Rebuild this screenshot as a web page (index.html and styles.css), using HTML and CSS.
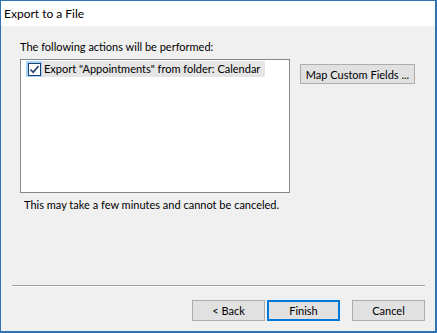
FILE: index.html
```html
<!DOCTYPE html>
<html>
  <head>
    <title>Export to a File</title>
    <link rel="stylesheet" href="styles.css">
  </head>
  <body>
    <div class="window">
      <div class="titlebar">Export to a File</div>
      <main class="content">
        <p class="caption">The following actions will be performed:</p>
        <div class="main-row">
          <div class="listbox">
            <div class="item">
              <span class="check-cell">
                <span class="checkbox">
                  <svg width="11" height="11" viewBox="0 0 11 11">
                    <path d="M1.5 5.5 L4.2 8.2 L9.5 2" fill="none" stroke="#1c3f6b" stroke-width="1.6"/>
                  </svg>
                </span>
              </span>
              <span class="item-text">Export "Appointments" from folder: Calendar</span>
            </div>
          </div>
          <button class="btn btn-map">Map Custom Fields ...</button>
        </div>
        <p class="note">This may take a few minutes and cannot be canceled.</p>
      </main>
      <footer class="footer">
        <div class="separator"></div>
        <div class="buttons">
          <button class="btn">&lt; Back</button>
          <button class="btn btn-default">Finish</button>
          <button class="btn btn-cancel">Cancel</button>
        </div>
      </footer>
    </div>
  </body>
</html>
```

FILE: styles.css
```css
* {
  margin: 0;
  padding: 0;
  box-sizing: border-box;
}
body {
  font-family: Lato, "Liberation Sans", sans-serif;
  font-size: 11px;
  color: #000;
  background: #fff;
}
.window {
  width: 437px;
  height: 333px;
  border: 1px solid #2e74b5;
  border-right-width: 2px;
  border-bottom-width: 2px;
  background-color: #f0f0f0;
  display: flex;
  flex-direction: column;
}
.titlebar {
  height: 25px;
  line-height: 25px;
  background-color: #fff;
  padding-left: 3px;
  font-size: 12px;
}
.content {
  flex: 1;
  padding: 13px 0 0 19px;
}
.caption {
  line-height: 16px;
  margin-bottom: 4px;
}
.main-row {
  display: flex;
  align-items: flex-start;
  gap: 10px;
}
.listbox {
  width: 270px;
  height: 134px;
  background-color: #fff;
  border: 1px solid #828790;
  padding: 1px 0 0 5px;
}
.item {
  display: flex;
  align-items: center;
  width: 239px;
  height: 16px;
  background-color: #e5e5e5;
}
.check-cell {
  width: 16px;
  height: 16px;
  background-color: #a8d4fb;
  display: flex;
  align-items: center;
  justify-content: center;
}
.checkbox {
  width: 13px;
  height: 13px;
  border: 1px solid #1c3f6b;
  background-color: #fff;
  display: flex;
  align-items: center;
  justify-content: center;
}
.item-text {
  padding-left: 2px;
  white-space: nowrap;
  line-height: 16px;
}
.btn {
  font-family: Lato, "Liberation Sans", sans-serif;
  font-size: 11px;
  color: #000;
  background-color: #e1e1e1;
  border: 1px solid #adadad;
  height: 21px;
  width: 73px;
  line-height: 17px;
  white-space: nowrap;
}
.btn-map {
  width: 115px;
  height: 20px;
  margin-top: 5px;
}
.note {
  line-height: 16px;
  margin-top: 4px;
  padding-left: 4px;
}
.footer {
  padding: 0 10px 10px 11px;
}
.separator {
  border-top: 1px solid #a0a0a0;
  border-bottom: 1px solid #fff;
  margin-bottom: 13px;
}
.buttons {
  display: flex;
  justify-content: flex-end;
  gap: 2px;
}
.btn-default {
  border: 2px solid #0078d7;
}
.btn-cancel {
  margin-left: 10px;
}
```
